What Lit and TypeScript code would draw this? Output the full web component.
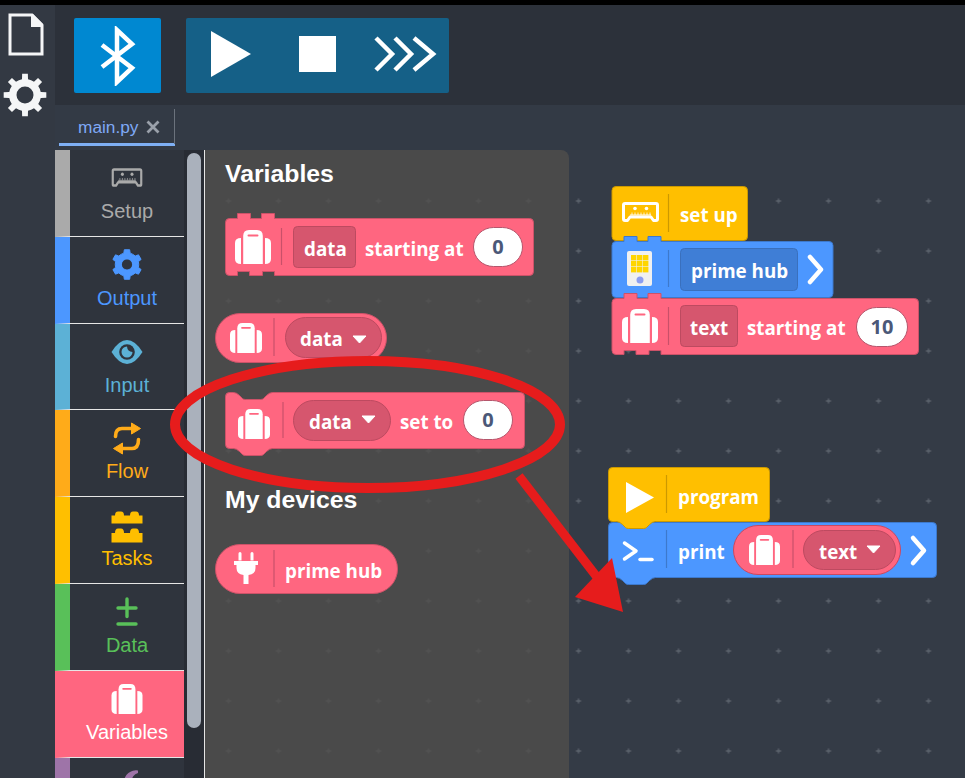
import { LitElement, html, css, svg } from "lit";
import { customElement } from "lit/decorators.js";

const PINK = { f: "#ff6680", s: "#cc5268", d: "#d6566e", ds: "#bd4a60", sep: "#c9506a" };
const BLUE = { f: "#4c97ff", s: "#3d79cc", d: "#3f7ed6", ds: "#3a70bd", sep: "#3d79cc" };
const YEL = { f: "#ffbf00", s: "#cc9900", d: "#cc9900", ds: "#cc9900", sep: "#cc9900" };
type C = typeof PINK;
type Top = "round" | "tabs" | "dip";
type Bot = "cuts" | "bump" | "round";

function shape(x0: number, y0: number, x1: number, y1: number, top: Top, bot: Bot, c: C) {
  const r = 4;
  let d = `M${x0} ${y0 + r}Q${x0} ${y0} ${x0 + r} ${y0}`;
  if (top === "tabs") {
    d += `H${x0 + 12}V${y0 - 5}H${x0 + 25}V${y0}H${x0 + 36}V${y0 - 5}H${x0 + 49}V${y0}`;
  } else if (top === "dip") {
    d += `H${x0 + 8}Q${x0 + 11} ${y0} ${x0 + 14} ${y0 + 3}L${x0 + 17} ${y0 + 6}Q${x0 + 18} ${y0 + 7} ${x0 + 20} ${y0 + 7}H${x0 + 35}Q${x0 + 37} ${y0 + 7} ${x0 + 38} ${y0 + 6}L${x0 + 41} ${y0 + 3}Q${x0 + 44} ${y0} ${x0 + 47} ${y0}`;
  }
  d += `H${x1 - r}Q${x1} ${y0} ${x1} ${y0 + r}V${y1 - r}Q${x1} ${y1} ${x1 - r} ${y1}`;
  if (bot === "cuts") {
    d += `H${x0 + 49}V${y1 - 4}H${x0 + 37}V${y1}H${x0 + 24}V${y1 - 4}H${x0 + 12}V${y1}`;
  } else if (bot === "bump") {
    d += `H${x0 + 47}Q${x0 + 44} ${y1} ${x0 + 41} ${y1 + 3}L${x0 + 38} ${y1 + 6}Q${x0 + 37} ${y1 + 7} ${x0 + 35} ${y1 + 7}H${x0 + 20}Q${x0 + 18} ${y1 + 7} ${x0 + 17} ${y1 + 6}L${x0 + 14} ${y1 + 3}Q${x0 + 11} ${y1} ${x0 + 8} ${y1}`;
  }
  d += `H${x0 + r}Q${x0} ${y1} ${x0} ${y1 - r}Z`;
  return svg`<path d=${d} fill=${c.f} stroke=${c.s} stroke-width="1"/>`;
}
const pill = (x0: number, y0: number, x1: number, y1: number, c: C) =>
  svg`<rect x=${x0} y=${y0} width=${x1 - x0} height=${y1 - y0} rx=${(y1 - y0) / 2} fill=${c.f} stroke=${c.s}/>`;
const sep = (x: number, y0: number, y1: number, c: C) =>
  svg`<line x1=${x} x2=${x} y1=${y0} y2=${y1} stroke=${c.sep} stroke-width="1.2"/>`;
const field = (x0: number, y0: number, x1: number, y1: number, c: C, r = 4) =>
  svg`<rect x=${x0 + 0.5} y=${y0 + 0.5} width=${x1 - x0 - 1} height=${y1 - y0 - 1} rx=${r} fill=${c.d} stroke=${c.ds}/>`;
const txt = (x: number, y: number, s: string) => svg`<text class="bt" x=${x} y=${y}>${s}</text>`;
const num = (x0: number, y0: number, x1: number, y1: number, s: string) => svg`
  <rect x=${x0 + 0.5} y=${y0 + 0.5} width=${x1 - x0 - 1} height=${y1 - y0 - 1} rx="20" fill="#fff" stroke="#b5566c"/>
  <text class="nt" x=${(x0 + x1) / 2} y=${y1 - 13}>${s}</text>`;
const tri = (x: number, y: number) =>
  svg`<path d="M${x} ${y}H${x + 13}L${x + 6.5} ${y + 7}Z" fill="#fff" stroke="#fff" stroke-width="1" stroke-linejoin="round"/>`;
const chevron = (x: number, y: number) =>
  svg`<path d="M${x} ${y}L${x + 11} ${y + 12.5}L${x} ${y + 25}" fill="none" stroke="#fff" stroke-width="4.5" stroke-linecap="round" stroke-linejoin="round"/>`;

function suitcase(x: number, y: number, w: number, h: number, fill: string, slot: string) {
  return svg`<g transform="translate(${x} ${y}) scale(${w / 36} ${h / 34})">
    <path d="M6 8Q0 8 0 13V29Q0 34 6 34Z" fill=${fill}/>
    <path d="M30 8Q36 8 36 13V29Q36 34 30 34Z" fill=${fill}/>
    <path d="M8.2 34V6Q8.2 0 14 0H22Q27.8 0 27.8 6V34Z" fill=${fill}/>
    <rect x="12.5" y="4.5" width="11" height="2" rx="1" fill=${slot}/>
  </g>`;
}
function setupIcon(x: number, y: number, w: number, h: number, col: string, sw = 3) {
  const ticks = [10, 13, 16, 19, 22, 25, 28];
  return svg`<g transform="translate(${x} ${y}) scale(${w / 37} ${h / 20})">
    <path d="M3 1.5H34Q35.5 1.5 35.5 3V17Q35.5 18.5 34 18.5H31.5L29 15H8L5.5 18.5H3Q1.5 18.5 1.5 17V3Q1.5 1.5 3 1.5Z" fill="none" stroke=${col} stroke-width=${sw} stroke-linejoin="round"/>
    <circle cx="13" cy="6.5" r="1.8" fill=${col}/><circle cx="24.5" cy="6.5" r="1.8" fill=${col}/>
    <line x1="8" x2="29" y1="13" y2="13" stroke=${col} stroke-width="1"/>
    ${ticks.map((t) => svg`<line x1=${t} x2=${t} y1="10.5" y2="13" stroke=${col} stroke-width="0.8"/>`)}
  </g>`;
}
function gearPath(cx: number, cy: number, ro: number, rb: number, hole: number, n: number, tw: number, bw: number, rot = 0) {
  let d = "";
  const step = (Math.PI * 2) / n;
  const pt = (r: number, a: number) => `${(cx + r * Math.cos(a)).toFixed(2)} ${(cy + r * Math.sin(a)).toFixed(2)}`;
  for (let i = 0; i < n; i++) {
    const a = rot + i * step;
    const w = step * tw;
    const wb = step * bw;
    d += `${i ? "L" : "M"}${pt(rb, a - wb)}L${pt(ro, a - w)}L${pt(ro, a + w)}L${pt(rb, a + wb)}`;
    d += `Q${pt(rb * 1.02, a + step / 2)} ${pt(rb, a + step - wb)}`;
  }
  d += `Z M${cx + hole} ${cy}A${hole} ${hole} 0 1 0 ${cx - hole} ${cy}A${hole} ${hole} 0 1 0 ${cx + hole} ${cy}Z`;
  return d;
}

const icons: Record<string, unknown> = {
  setup: svg`${setupIcon(4.5, 6, 31, 19, "#aaaaaa", 2.6)}`,
  output: svg`<path fill="#4c97ff" stroke="#4c97ff" stroke-width="1" stroke-linejoin="round" fill-rule="evenodd" d=${gearPath(20, 15.5, 15, 11.8, 5.2, 6, 0.17, 0.26, -Math.PI / 2)}/>
    <circle cx="20" cy="15.5" r="5" fill="#2f343d"/>`,
  input: svg`<path d="M4.5 16Q12 4 20 4Q28 4 35.5 16Q28 28 20 28Q12 28 4.5 16Z" fill="#5cb1d6"/>
    <circle cx="20" cy="16" r="7.8" fill="#2f343d"/><path d="M20 10.5A5.5 5.5 0 1 0 25.5 16A6 6 0 0 1 20 10.5Z" fill="#5cb1d6"/>`,
  flow: svg`<g fill="none" stroke="#ffab19" stroke-width="3.6" stroke-linecap="round">
      <path d="M8.5 14.5Q8.5 6.5 15 6.5H26"/><path d="M31.5 17.5Q31.5 26.5 25 26.5H14"/></g>
    <path d="M24.5 1L33.5 6.5L24.5 12Z" fill="#ffab19" stroke="#ffab19" stroke-linejoin="round"/>
    <path d="M15.5 21L6.5 26.5L15.5 32Z" fill="#ffab19" stroke="#ffab19" stroke-linejoin="round"/>`,
  tasks: svg`<g fill="#ffbf00"><path d="M4.5 14.5V6.5H8Q8 2.5 11 2.5H14Q17 2.5 17 6.5H23Q23 2.5 26 2.5H29Q32 2.5 32 6.5H35.5V14.5Z"/>
    <path d="M4.5 33.5V24H8Q8 19.5 11 19.5H14Q17 19.5 17 24H23Q23 19.5 26 19.5H29Q32 19.5 32 24H35.5V33.5Z"/></g>`,
  data: svg`<g stroke="#59c059" stroke-linecap="round" stroke-width="3.4"><path d="M20 3V20.5M11 12H29"/><path d="M11 28H29"/></g>`,
  variables: svg`${suitcase(4.5, 1, 31, 30, "#fff", "#ff6680")}`,
  more: svg`<path d="M31 0.5A12 12 0 0 0 17 12H25A8 8 0 0 1 31 3Z" fill="#9e74a8"/>`,
};

const cats = [
  { k: "setup", l: "Setup", c: "#aaaaaa" },
  { k: "output", l: "Output", c: "#4c97ff" },
  { k: "input", l: "Input", c: "#5cb1d6" },
  { k: "flow", l: "Flow", c: "#ffab19" },
  { k: "tasks", l: "Tasks", c: "#ffbf00" },
  { k: "data", l: "Data", c: "#59c059" },
  { k: "variables", l: "Variables", c: "#ff6680", active: true },
  { k: "more", l: "", c: "#9e74a8" },
];

@customElement("app-root")
export class AppRoot extends LitElement {
  static styles = css`
    :host { display: block; position: relative; width: 965px; height: 778px; overflow: hidden; background: #000; font-family: "Liberation Sans", Arial, sans-serif; }
    .shell { display: flex; height: 773px; margin-top: 5px; position: absolute; top: 0; left: 0; right: 0; }
    .rail { width: 55px; flex: none; background: #333943; display: flex; flex-direction: column; align-items: flex-start; }
    .rail svg { display: block; }
    .rail .file { margin: 8px 0 0 8px; }
    .rail .gear { margin: 15px 0 0 2px; }
    .main { flex: 1; min-width: 0; display: flex; flex-direction: column; }
    .toolbar { height: 100px; flex: none; background: #2c313a; display: flex; gap: 25px; padding: 13px 0 0 19px; box-sizing: border-box; }
    .btn { height: 75px; border-radius: 2px; display: flex; align-items: center; }
    .bt-btn { width: 87px; background: #0088d1; justify-content: center; }
    .run { width: 263px; background: #156087; }
    .tabs { height: 45px; flex: none; background: #333a45; padding-left: 4px; box-sizing: border-box; }
    .tab { width: 116px; height: 41px; box-sizing: border-box; border-bottom: 3px solid #7fb0f5; display: flex; align-items: center; gap: 7px; padding: 6px 0 0 19px; font-size: 17.3px; color: #7fa9f5; position: relative; }
    .tab::after { content: ""; position: absolute; right: 0; top: 4px; bottom: -1px; width: 1px; background: #6b727c; }
    .body { flex: 1; min-height: 0; display: flex; }
    .toolbox { width: 129px; flex: none; background: #2f343d; overflow: hidden; }
    .cat { height: 86.8px; box-sizing: border-box; border-bottom: 1px solid #e6e6e6; border-left: 15px solid; display: flex; flex-direction: column; align-items: center; padding-top: 12px; font-size: 20px; }
    .cat svg { display: block; overflow: visible; }
    .cat span { line-height: 34px; }
    .cat.active { background: #ff6680; color: #fff !important; }
    .scroll { width: 20px; flex: none; background: #282c34; box-sizing: border-box; padding: 3px 3px 0 3px; }
    .thumb { width: 14px; height: 575px; border-radius: 7px; background: #aab1bc; }
    .work { flex: 1; min-width: 0; display: flex; background: #343b46; border-left: 1px solid #e6e6e6; }
    .flyout { width: 364px; flex: none; background: #4a4a4a; border-top-right-radius: 8px; }
    .over { position: absolute; left: 0; top: 0; pointer-events: none; }
    text { font-family: "Open Sans", "Noto Sans", sans-serif; }
    .bt { font-weight: 700; font-size: 18.8px; fill: #fff; }
    .nt { font-weight: 700; font-size: 20px; fill: #4b5878; text-anchor: middle; }
    .hd { font-family: "Liberation Sans", Arial, sans-serif; font-weight: 700; font-size: 24.8px; fill: #fff; }
  `;

  private overlay() {
    return svg`
      <defs>
        <pattern id="pa" x="19.5" y="-9" width="50" height="50" patternUnits="userSpaceOnUse">
          <path d="M6.5 10H11.5M9 7.5V12.5" stroke="#5b626c" stroke-width="1.3"/>
        </pattern>
        <pattern id="pb" x="19.5" y="-9" width="50" height="50" patternUnits="userSpaceOnUse">
          <path d="M6.5 10H11.5M9 7.5V12.5" stroke="#525252" stroke-width="1.3"/>
        </pattern>
      </defs>
      <rect x="205" y="190" width="364" height="588" fill="url(#pb)"/>
      <rect x="569" y="190" width="396" height="588" fill="url(#pa)"/>

      <text class="hd" x="225" y="182">Variables</text>
      <text class="hd" x="225" y="508">My devices</text>

      ${shape(225.5, 218.5, 533.5, 275.5, "tabs", "cuts", PINK)}
      ${suitcase(235, 230, 36, 34, "#fff", "#ff6680")}
      ${sep(281.5, 228, 265, PINK)}
      ${field(293, 226, 356, 268, PINK)}
      ${txt(304, 256, "data")}
      ${txt(365, 256, "starting at")}
      ${num(473, 227, 523, 267, "0")}

      ${pill(215.5, 313.5, 386.5, 362.5, PINK)}
      ${suitcase(230, 323, 32, 30, "#fff", "#ff6680")}
      ${sep(274, 318, 356, PINK)}
      ${field(285, 317, 382, 358, PINK, 20)}
      ${txt(300, 346, "data")}
      ${tri(353, 336)}

      ${shape(225.5, 392.5, 524.5, 448.5, "dip", "bump", PINK)}
      ${suitcase(238, 409, 32, 30, "#fff", "#ff6680")}
      ${sep(283, 402, 438, PINK)}
      ${field(293, 400, 391, 441, PINK, 20)}
      ${txt(309, 429, "data")}
      ${tri(362, 416)}
      ${txt(400, 429, "set to")}
      ${num(463, 400, 513, 440, "0")}

      ${pill(215.5, 544.5, 397.5, 593.5, PINK)}
      <path d="M238.5 553.5a1.5 1.5 0 0 1 3 0v7h-3zM250.5 553.5a1.5 1.5 0 0 1 3 0v7h-3zM234 561h24v4h-2.5v3q0 6-7 7v9h-5v-9q-7-1-7-7v-3h-2.5z" fill="#fff"/>
      ${sep(274, 550, 587, PINK)}
      ${txt(285, 578, "prime hub")}

      ${shape(612, 186.5, 747.5, 240.5, "round", "round", YEL)}
      ${setupIcon(622, 202, 37, 20, "#fff")}
      ${sep(668.5, 194, 232, YEL)}
      ${txt(680, 222, "set up")}

      ${shape(612, 241.5, 833, 297.5, "tabs", "round", BLUE)}
      <rect x="627" y="251" width="25" height="35" rx="2" fill="#f0f0f0"/>
      <g fill="#ffd500">
        ${[0, 1, 2].map((c) => [0, 1, 2].map((r) => svg`<rect x=${631 + c * 6} y=${255 + r * 6} width="5.4" height="5.4"/>`))}
      </g>
      <circle cx="640" cy="280" r="3.5" fill="#8b9df0"/>
      ${sep(668.5, 250, 287, BLUE)}
      ${field(680, 248, 798, 291, BLUE)}
      ${txt(691, 278, "prime hub")}
      ${chevron(810, 257)}

      ${shape(612, 298.5, 918.5, 354.5, "tabs", "cuts", PINK)}
      ${suitcase(622, 309, 36, 34, "#fff", "#ff6680")}
      ${sep(668.5, 307, 345, PINK)}
      ${field(680, 305, 738, 347, PINK)}
      ${txt(690, 335, "text")}
      ${txt(747, 335, "starting at")}
      ${num(856, 307, 908, 347, "10")}

      ${shape(608.5, 522.5, 936.5, 577.5, "round", "bump", BLUE)}
      <path d="M624.5 543L636 551L624.5 559" fill="none" stroke="#fff" stroke-width="3.5" stroke-linecap="round" stroke-linejoin="round"/>
      <line x1="640" x2="652" y1="559.5" y2="559.5" stroke="#fff" stroke-width="3.5" stroke-linecap="round"/>
      ${sep(666.5, 530, 568, BLUE)}
      ${txt(678, 559, "print")}
      ${pill(733.5, 525.5, 900.5, 574.5, { ...PINK, s: "#c94860" })}
      ${suitcase(749, 535, 31, 30, "#fff", "#ff6680")}
      ${sep(793, 530, 568, PINK)}
      ${field(803, 530, 896, 570, PINK, 20)}
      ${txt(819, 559, "text")}
      ${tri(867, 546)}
      ${chevron(913, 538)}

      ${shape(608.5, 467.5, 769.5, 521.5, "round", "bump", YEL)}
      <path d="M626 482L654 497.5L626 513Z" fill="#fff"/>
      ${sep(666.5, 475, 513, YEL)}
      ${txt(678, 504, "program")}

      <ellipse cx="367.5" cy="424.5" rx="192.5" ry="63.5" fill="none" stroke="#e61c1c" stroke-width="10"/>
      <line x1="519" y1="476" x2="600" y2="581" stroke="#e61c1c" stroke-width="9"/>
      <path d="M623 612L575 597L612 558Z" fill="#e61c1c"/>
    `;
  }

  render() {
    return html`
      <div class="shell">
        <div class="rail">
          <svg class="file" width="36" height="44" viewBox="0 0 36 44">
            <path d="M2 2H24L34 12V41H2Z" fill="none" stroke="#f5f6f7" stroke-width="3"/>
            <path d="M23 1H25L35 11V14H23Z" fill="#f5f6f7"/>
          </svg>
          <svg class="gear" width="46" height="46" viewBox="0 0 46 46">
            <path fill="#f5f6f7" fill-rule="evenodd" d=${gearPath(23, 23, 21.5, 16, 8.5, 8, 0.17, 0.24, -Math.PI / 2)}/>
          </svg>
        </div>
        <div class="main">
          <div class="toolbar">
            <div class="btn bt-btn">
              <svg width="40" height="60" viewBox="0 0 40 60">
                <path d="M4 19L34 42L19 56V4L34 18L4 41" fill="none" stroke="#fff" stroke-width="4.5"/>
              </svg>
            </div>
            <div class="btn run">
              <svg width="263" height="75" viewBox="0 0 263 75">
                <path d="M25 13L65 36L25 59Z" fill="#fff"/>
                <rect x="113" y="18" width="37" height="36" fill="#fff"/>
                <g fill="none" stroke="#fff" stroke-width="4.5">
                  <path d="M190 20L206 36L190 52"/><path d="M209 20L225 36L209 52"/><path d="M228 20L247 36L228 52"/>
                </g>
              </svg>
            </div>
          </div>
          <div class="tabs">
            <div class="tab">main.py
              <svg width="14" height="14" viewBox="0 0 14 14"><path d="M1.5 1.5L12.5 12.5M12.5 1.5L1.5 12.5" stroke="#9aa0aa" stroke-width="2.8"/></svg>
            </div>
          </div>
          <div class="body">
            <div class="toolbox">
              ${cats.map(
                (c) => html`<div class="cat ${c.active ? "active" : ""}" style="color:${c.c};border-left-color:${c.c}">
                  <svg width="40" height="32" viewBox="0 0 40 32">${icons[c.k]}</svg>
                  ${c.l ? html`<span>${c.l}</span>` : ""}
                </div>`
              )}
            </div>
            <div class="scroll"><div class="thumb"></div></div>
            <div class="work"><div class="flyout"></div></div>
          </div>
        </div>
      </div>
      <svg class="over" width="965" height="778" viewBox="0 0 965 778">${this.overlay()}</svg>
    `;
  }
}
